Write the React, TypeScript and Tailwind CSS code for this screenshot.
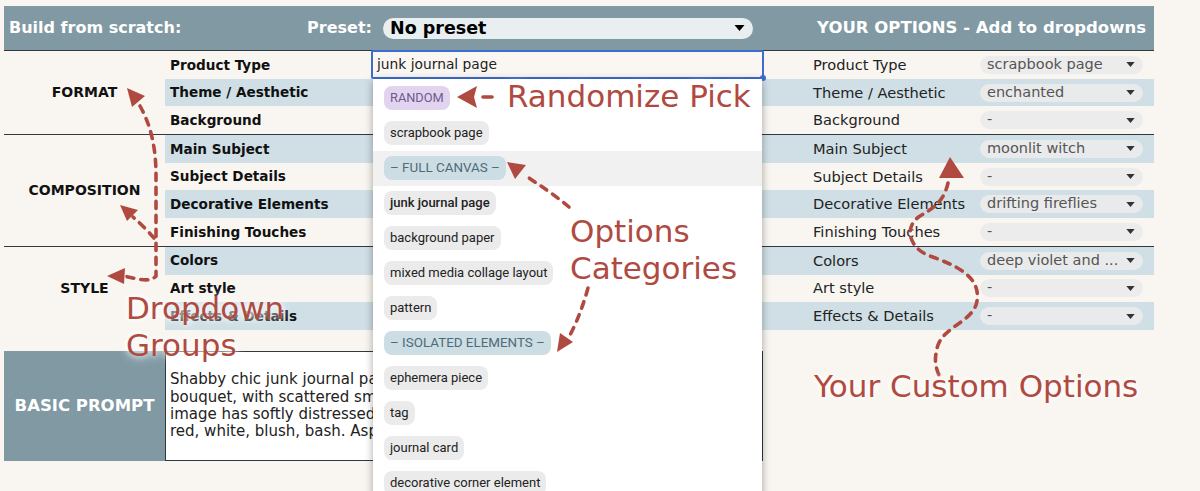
import type { ReactNode } from "react";

type Group = { name: string; rows: string[] };

const groups: Group[] = [
  { name: "FORMAT", rows: ["Product Type", "Theme / Aesthetic", "Background"] },
  { name: "COMPOSITION", rows: ["Main Subject", "Subject Details", "Decorative Elements", "Finishing Touches"] },
  { name: "STYLE", rows: ["Colors", "Art style", "Effects & Details"] }
];

const picks: Record<string, string> = {
  "Product Type": "scrapbook page",
  "Theme / Aesthetic": "enchanted",
  Background: "-",
  "Main Subject": "moonlit witch",
  "Subject Details": "-",
  "Decorative Elements": "drifting fireflies",
  "Finishing Touches": "-",
  Colors: "deep violet and ...",
  "Art style": "-",
  "Effects & Details": "-"
};

type MenuItem = { text: string; kind?: "random" | "cat"; active?: boolean; strong?: boolean };

const menu: MenuItem[] = [
  { text: "RANDOM", kind: "random" },
  { text: "scrapbook page" },
  { text: "– FULL CANVAS –", kind: "cat", active: true },
  { text: "junk journal page", strong: true },
  { text: "background paper" },
  { text: "mixed media collage layout" },
  { text: "pattern" },
  { text: "– ISOLATED ELEMENTS –", kind: "cat" },
  { text: "ephemera piece" },
  { text: "tag" },
  { text: "journal card" },
  { text: "decorative corner element" }
];

// the list covers the rest of each line, only the left part shows
const promptLines = [
  "Shabby chic junk journal page featuring a vintage teacup and a rose",
  "bouquet, with scattered small lace scraps, buttons and pressed flowers. The",
  "image has softly distressed edges and layered paper textures. Colors: dusty",
  "red, white, blush, bash. Aspect ratio 3:4."
];

function Caret({ className }: { className?: string }) {
  return (
    <svg viewBox="0 0 10 6" className={className} aria-hidden="true">
      <path d="M0 0 L10 0 L5 6 Z" fill="currentColor" />
    </svg>
  );
}

function MySelect({ value }: { value: string }) {
  return (
    <div className="flex h-[18px] w-[163px] items-center justify-between rounded-full bg-[#ebebeb]/90 pl-[7px] pr-[8px] text-[14.5px] text-[#555]">
      <span className="whitespace-nowrap">{value}</span>
      <Caret className="h-[5px] w-[9px] text-[#333]" />
    </div>
  );
}

function Note({ children, className }: { children: ReactNode; className: string }) {
  return (
    <div
      className={`absolute font-['DejaVu_Sans',sans-serif] text-[31px] text-[#b04a41] [text-shadow:0_0_6px_#fff,0_0_12px_#fff] ${className}`}
    >
      {children}
    </div>
  );
}

function Arrows() {
  const red = "#b04a41";
  const dash = { fill: "none", stroke: red, strokeWidth: 3.6, strokeDasharray: "7 7", strokeLinecap: "round" as const };
  return (
    <svg className="pointer-events-none absolute left-0 top-0 h-[491px] w-[1200px]" viewBox="0 0 1200 491" aria-hidden="true">
      {/* randomize */}
      <polygon points="457,97 477,86 474,97 477,108" fill={red} />
      <line x1="483" y1="97" x2="492" y2="97" stroke={red} strokeWidth="3.6" strokeLinecap="round" />
      {/* options categories */}
      <path d="M569 207 C556 196, 541 186, 526 176" {...dash} />
      <polygon points="507,162 526,165 515,179" fill={red} />
      <path d="M588 288 C583 306, 577 322, 569 337" {...dash} />
      <polygon points="557,352 573,342 560,333" fill={red} />
      {/* dropdown groups */}
      <path d="M140 106 C150 124, 156 145, 156 176 L156 276 C150 283, 138 279, 124 276" {...dash} />
      <polygon points="127,88 145,96 132,107" fill={red} />
      <path d="M154 238 C148 231, 140 223, 133 217" {...dash} />
      <polygon points="120,205 138,210 127,221" fill={red} />
      <polygon points="107,276 125,268 124,284" fill={red} />
      {/* custom options */}
      <path d="M948 183 C944 201, 934 208, 920 216 C904 226, 908 248, 930 256 C955 265, 981 276, 977 301 C974 321, 945 326, 938 345 C934 358, 935 366, 939 375" {...dash} />
      <polygon points="950,157 964,178 939,178" fill={red} />
    </svg>
  );
}

export default function App() {
  let rowIndex = 0;

  return (
    <div className="relative h-[491px] w-[1200px] overflow-hidden bg-[#f9f6f1] font-['DejaVu_Sans',sans-serif] text-[#111]">
      <div className="ml-[4px] w-[1150px] pt-[6px]">
        {/* header */}
        <div className="flex h-[44px] items-center bg-[#8099a3] text-white">
          <div className="flex w-[379px] items-center justify-between pl-[5px] pr-[11px] font-bold">
            <span className="text-[16px]">Build from scratch:</span>
            <span className="text-[16px]">Preset:</span>
          </div>
          <div className="flex h-[21px] w-[370px] items-center justify-between rounded-full bg-[#e9eef1] pl-[7px] pr-[8px] text-black">
            <span className="text-[17.5px] font-bold">No preset</span>
            <Caret className="h-[6px] w-[11px]" />
          </div>
          <div className="flex-1 pr-[8px] text-right text-[16.5px] font-bold">YOUR OPTIONS - Add to dropdowns</div>
        </div>

        {/* table */}
        {groups.map((group) => (
          <div key={group.name} className="flex border-t border-[#2f3a3f]">
            <div className="flex w-[161px] items-center justify-center text-[14px] font-bold">{group.name}</div>
            <div className="flex-1">
              {group.rows.map((label) => {
                const i = rowIndex++;
                return (
                  <div key={label} className={`flex h-[27.7px] items-center ${i % 2 === 1 ? "bg-[#cfdfe5]" : ""}`}>
                    <div className="w-[205px] whitespace-nowrap pl-[5px] text-[13.6px] font-bold">{label}</div>
                    <div className="flex h-full w-[395px] items-start">
                      {i === 0 && (
                        <div className="relative -mt-[1px] ml-[1px] flex h-[29px] w-[393px] items-center rounded-[2px] border-2 border-[#3c6ed2] bg-[#faf7f2] pl-[4px] text-[13.8px] text-[#222]">
                          junk journal page
                          <span className="absolute -bottom-[4px] -right-[4px] h-[6px] w-[6px] rounded-full bg-[#3c6ed2]" />
                        </div>
                      )}
                    </div>
                    <div className="w-[215px] whitespace-nowrap pl-[48px] text-[14.6px] text-[#222]">{label}</div>
                    <MySelect value={picks[label]} />
                  </div>
                );
              })}
            </div>
          </div>
        ))}

        {/* prompt */}
        <div className="mt-[21px] flex">
          <div className="flex h-[110px] w-[161px] items-center justify-center bg-[#8099a3] text-[16.5px] font-bold text-white">
            BASIC PROMPT
          </div>
          <div className="flex h-[110px] w-[598px] items-center border border-[#2f3a3f] bg-white pl-[4px] text-[15px] leading-[17.3px] text-[#222]">
            <div className="w-[203px] overflow-hidden">
              {promptLines.map((line) => (
                <div key={line} className="whitespace-nowrap">{line}</div>
              ))}
            </div>
          </div>
        </div>
      </div>

      {/* open dropdown list */}
      <div className="absolute left-[373px] top-[79px] h-[430px] w-[389px] bg-white pt-[1.5px] font-['Roboto',sans-serif] shadow-[0_2px_8px_rgba(0,0,0,0.35)]">
        {menu.map((item) => (
          <div key={item.text} className={`flex h-[35px] items-center px-[11px] ${item.active ? "bg-[#f1f1f1]" : ""}`}>
            {item.kind === "random" ? (
              <span className="flex h-[24px] items-center rounded-[8px] bg-[#e2d3ef] px-[6px] text-[12.8px] text-[#6e5a8e]">{item.text}</span>
            ) : item.kind === "cat" ? (
              <span className="flex h-[24px] items-center rounded-[8px] bg-[#cddde4] px-[6px] text-[13.4px] text-[#4d6b78]">{item.text}</span>
            ) : (
              <span
                className={`flex h-[24px] items-center rounded-[8px] bg-[#ebebeb] px-[6px] text-[13px] text-[#222] ${item.strong ? "font-medium" : ""}`}
              >
                {item.text}
              </span>
            )}
          </div>
        ))}
      </div>

      {/* annotations */}
      <Arrows />
      <Note className="left-[507px] top-[81px] leading-none">Randomize Pick</Note>
      <Note className="left-[570px] top-[213px] leading-[37px]">
        Options
        <br />
        Categories
      </Note>
      <Note className="left-[126px] top-[290px] leading-[37px]">
        Dropdown
        <br />
        Groups
      </Note>
      <Note className="left-[814px] top-[371px] leading-none">Your Custom Options</Note>
    </div>
  );
}
